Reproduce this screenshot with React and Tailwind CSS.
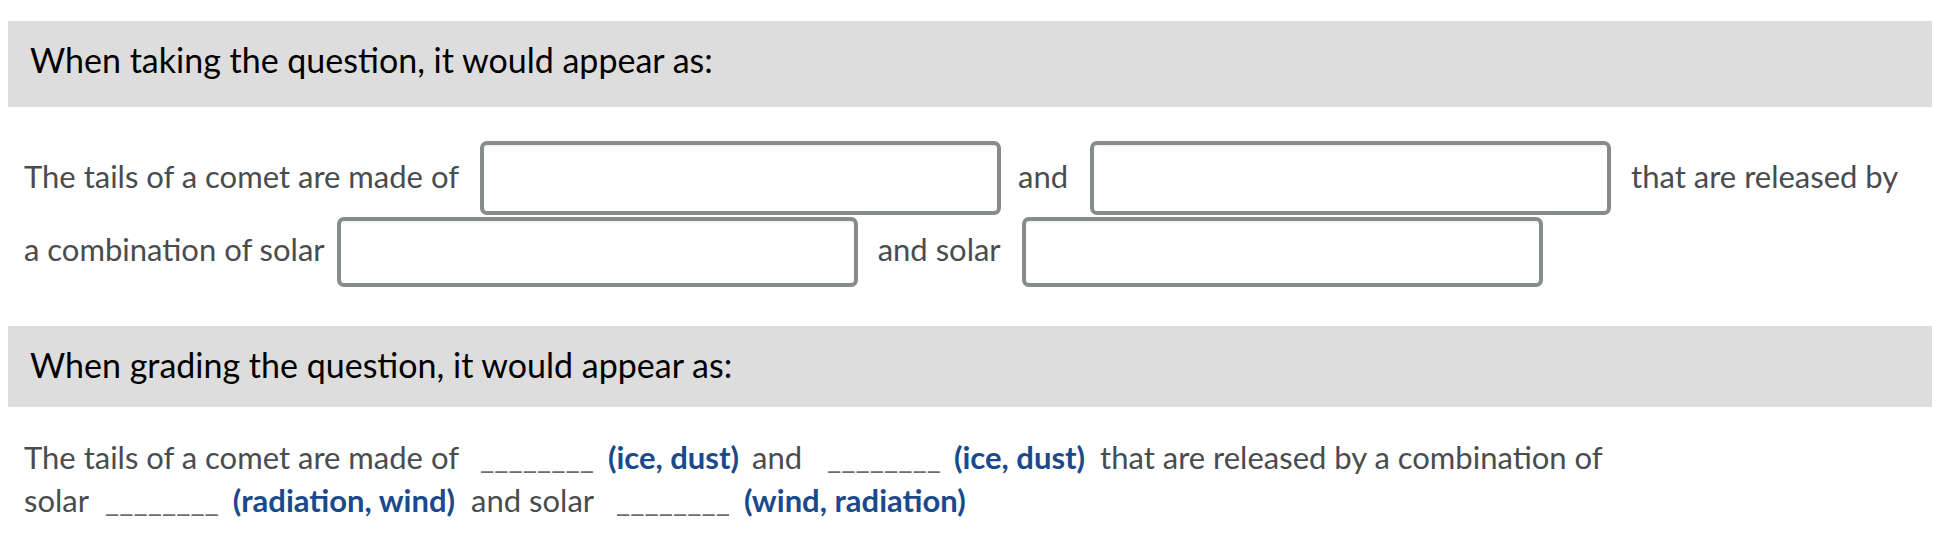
const BODY = 'text-[31px] text-[#494c4e]'
const BLUE = 'font-bold text-[#1b4a8c]'

function Box({ className }) {
  return <div className={`w-[521px] shrink-0 rounded-[7px] border-4 border-[#878b8c] bg-white shadow-[inset_0_2px_2px_rgba(0,0,0,0.05)] ${className}`} />
}

function Blank({ className }) {
  return <span className={`text-[#6b6e70] ${className}`}>________</span>
}

export default function App() {
  return (
    <div className="min-h-[544px] bg-white pt-[21px] pl-[8px] pr-[14px]" style={{ fontFamily: 'Lato, "Noto Sans", sans-serif' }}>
      {/* taking */}
      <div className="h-[86px] bg-[#dddddd] pl-[22px] pt-[18px]">
        <h2 className="text-[34px] leading-[41px] text-black">When taking the question, it would appear as:</h2>
      </div>

      <div className={`pl-[16px] pt-[34px] ${BODY}`}>
        <div className="flex h-[74px] items-center">
          <span className="-mt-[3px]">The tails of a comet are made of</span>
          <Box className="ml-[21px] h-[74px]" />
          <span className="-mt-[3px] ml-[17px]">and</span>
          <Box className="ml-[22px] h-[74px]" />
          <span className="-mt-[3px] ml-[20px]">that are released by</span>
        </div>
        <div className="mt-[2px] flex h-[70px] items-center">
          <span className="-mt-[6px]">a combination of solar</span>
          <Box className="ml-[12px] h-[70px]" />
          <span className="-mt-[6px] ml-[20px]">and solar</span>
          <Box className="ml-[21px] h-[70px]" />
        </div>
      </div>

      {/* grading */}
      <div className="mt-[39px] h-[81px] bg-[#dddddd] pl-[22px] pt-[18px]">
        <h2 className="text-[34px] leading-[41px] text-black">When grading the question, it would appear as:</h2>
      </div>

      <div className={`pl-[16px] pt-[29px] leading-[43px] ${BODY}`}>
        <div className="flex items-baseline">
          <span>The tails of a comet are made of</span>
          <Blank className="ml-[21px]" />
          <span className={`ml-[14px] ${BLUE}`}>(ice, dust)</span>
          <span className="ml-[13px]">and</span>
          <Blank className="ml-[25px]" />
          <span className={`ml-[13px] ${BLUE}`}>(ice, dust)</span>
          <span className="ml-[15px]">that are released by a combination of</span>
        </div>
        <div className="flex items-baseline">
          <span>solar</span>
          <Blank className="ml-[16px]" />
          <span className={`ml-[14px] ${BLUE}`}>(radiation, wind)</span>
          <span className="ml-[16px]">and solar</span>
          <Blank className="ml-[22px]" />
          <span className={`ml-[14px] ${BLUE}`}>(wind, radiation)</span>
        </div>
      </div>
    </div>
  )
}
